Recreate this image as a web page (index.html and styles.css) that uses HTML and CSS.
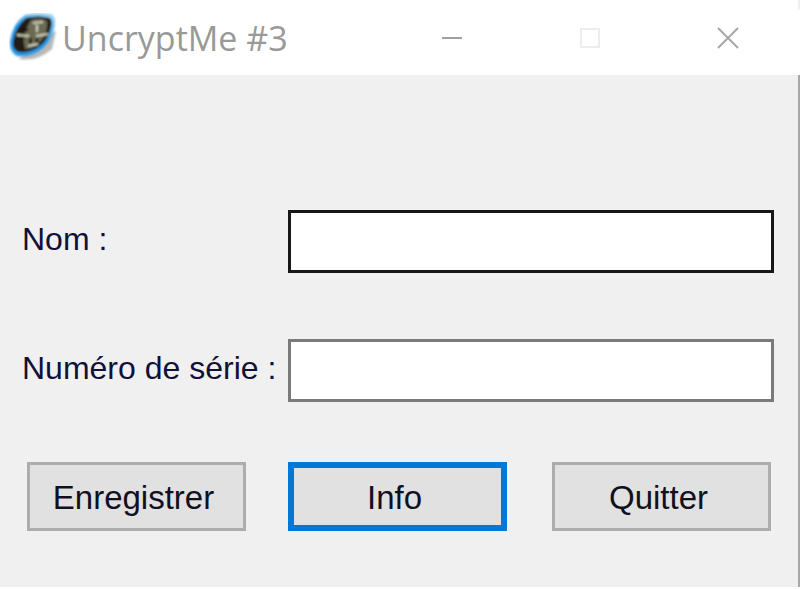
FILE: index.html
```html
<!DOCTYPE html>
<html lang="fr">
<head>
  <meta charset="UTF-8" />
  <title>UncryptMe #3</title>
  <link rel="stylesheet" href="styles.css">
</head>
<body>
  <div class="corner"></div>
  <div class="window">
    <div class="titlebar">
      <div class="title">
        <svg class="app-icon" width="48" height="48" viewBox="0 0 48 48">
          <defs>
            <filter id="soft" x="-20%" y="-20%" width="140%" height="140%"><feGaussianBlur stdDeviation="1.1" /></filter>
            <linearGradient id="ring" x1="0.8" y1="0" x2="0.2" y2="1">
              <stop offset="0" stop-color="#9ad4f4" />
              <stop offset="0.5" stop-color="#2b98ec" />
              <stop offset="1" stop-color="#2f9ae6" />
            </linearGradient>
          </defs>
          <path d="M10 46 Q28 49 43 36 L47 18 L30 24 Z" fill="#a8a8a8" opacity="0.8" filter="url(#soft)" />
          <g filter="url(#soft)">
            <path d="M16 2 Q30 -1 42 1 Q47 3 46 12 Q44 26 34 35 Q22 45 8 43 Q0 39 1 28 Q4 10 16 2 Z" fill="url(#ring)" />
            <path d="M17 5 Q30 2 41 5 Q44 8 42 15 Q39 27 31 33 Q20 41 9 39 Q3 36 4 28 Q7 13 17 5 Z" fill="#211f18" />
            <path d="M22 7 Q32 4 38 8 Q39 20 32 28 Q25 36 16 36 Q12 22 22 7 Z" fill="#6a6a54" />
            <path d="M8 22 L20 23 M27 23 L39 21 M19 33 L29 31 M24 10 L34 9 M28 12 L28 19" stroke="#d4d4ba" stroke-width="2" />
            <path d="M22 25 L21 31 M28 25 L28 30 M13 16 L19 17" stroke="#12120c" stroke-width="2.5" />
          </g>
        </svg>
        <span class="title-text">UncryptMe #3</span>
      </div>
      <div class="controls">
        <svg class="control" width="22" height="22" viewBox="0 0 22 22"><path d="M1 11 H21" stroke="#a0a0a0" stroke-width="2" fill="none" /></svg>
        <svg class="control" width="22" height="22" viewBox="0 0 22 22"><rect x="2" y="2" width="18" height="18" stroke="#ededed" stroke-width="2" fill="none" /></svg>
        <svg class="control" width="22" height="22" viewBox="0 0 22 22"><path d="M1 1 L21 21 M21 1 L1 21" stroke="#a8a8a8" stroke-width="2" fill="none" /></svg>
      </div>
    </div>
    <div class="content">
      <div class="row row-nom">
        <label class="label">Nom :</label>
        <input class="field field-active" type="text">
      </div>
      <div class="row row-serial">
        <label class="label">Numéro de série :</label>
        <input class="field" type="text">
      </div>
      <div class="buttons">
        <button class="btn">Enregistrer</button>
        <button class="btn btn-default">Info</button>
        <button class="btn btn-last">Quitter</button>
      </div>
    </div>
  </div>
</body>
</html>
```

FILE: styles.css
```css
html, body {
  margin: 0;
  padding: 0;
  height: 100%;
  background: #fff;
  overflow: hidden;
  font-family: "Liberation Sans", Arial, sans-serif;
}

.window {
  display: flex;
  flex-direction: column;
  height: 587px;
}

/* sliver of the window behind, top right */
.corner {
  position: absolute;
  top: 0;
  right: 0;
  width: 2px;
  height: 10px;
  background: #f0f0f0;
}

.titlebar {
  display: flex;
  justify-content: space-between;
  height: 75px;
  background: #fff;
}

.title {
  display: flex;
  align-items: center;
  padding: 0 0 0 9px;
  height: 75px;
}

.app-icon {
  margin-top: -1px;
}

.title-text {
  margin-left: 5px;
  font-family: "Open Sans", "Noto Sans", sans-serif;
  font-size: 34px;
  color: #999;
}

.controls {
  display: flex;
  align-items: center;
  gap: 116px;
  padding-right: 61px;
}

.control {
  display: block;
  margin-top: 1px;
}

.content {
  flex: 1;
  background: #f0f0f0;
  border-right: 2px solid #a8a8a8;
  padding: 135px 24px 0 22px;
}

.row {
  display: flex;
  align-items: center;
  height: 63px;
}

.row-serial {
  margin-top: 66px;
}

.label {
  width: 266px;
  margin-top: -4px;
  font-size: 32px;
  color: #101038;
}

.field {
  box-sizing: border-box;
  flex: none;
  width: 486px;
  height: 63px;
  background: #fff;
  border: 3px solid #7a7a7a;
  outline: none;
  margin: 0;
}

.field-active {
  border-color: #171717;
}

.buttons {
  display: flex;
  gap: 42px;
  margin-top: 60px;
  padding-left: 5px;
}

.btn {
  box-sizing: border-box;
  width: 219px;
  height: 69px;
  background: #e1e1e1;
  border: 3px solid #adadad;
  font-family: inherit;
  font-size: 33px;
  color: #101020;
  padding: 2px 6px 0 0;
}

.btn-default {
  border: 6px solid #0078d7;
}

.btn-last {
  margin-left: 3px;
}
```
